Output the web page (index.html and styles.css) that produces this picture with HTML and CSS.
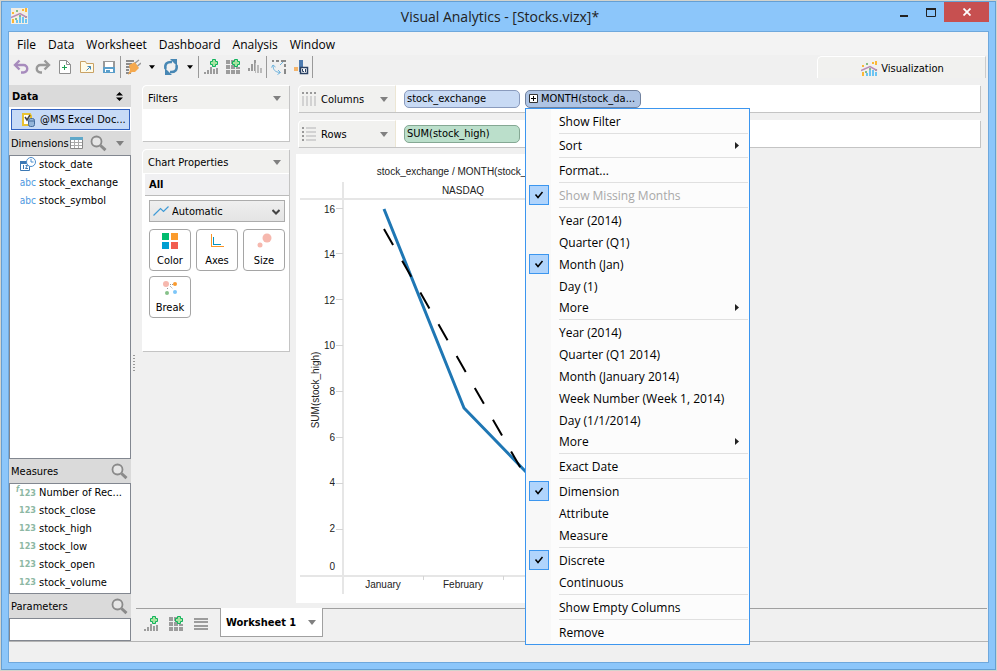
FILE: index.html
```html
<!DOCTYPE html>
<html lang="en">
<head>
    <meta charset="UTF-8">
    <meta name="viewport" content="width=device-width, initial-scale=1.0">
    <title>Visual Analytics - [Stocks.vizx]*</title>
    <link rel="stylesheet" href="styles.css">
</head>
<body>
    <!-- Shared icons -->
    <svg class="sprite" aria-hidden="true">
        <symbol id="i-search" viewBox="0 0 17 17">
            <path d="M10.5 10.5l5 4.700" stroke="#8a8a8a" stroke-width="3" fill="none"/>
            <circle cx="6.500" cy="6.500" r="5" fill="#e6e6e6" stroke="#8a8a8a" stroke-width="1.800"/>
        </symbol>
        <symbol id="i-caret" viewBox="0 0 8 5">
            <path d="M0 0h8L4 5z" fill="currentColor"/>
        </symbol>
        <symbol id="i-addchart" viewBox="0 0 16 16">
            <path d="M1 13h2v2H1zM4 11h2v4H4zM7 8h2v7H7zM10 10h2v5h-2zM13 9h2v6h-2z" fill="#9c9c9c"/>
            <path d="M9.500.5h3v2h2v3h-2v2h-3v-2h-2v-3h2z" fill="#a9e3a0" stroke="#10b35c"/>
        </symbol>
        <symbol id="i-addgrid" viewBox="0 0 16 16">
            <path d="M1 1h4v4H1zM6 1h3v4H6zM1 6h4v4H1zM6 6h4v4H6zM1 11h4v4H1zM6 11h4v4H6zM11 11h4v4h-4zM11 8h4v2h-4z" fill="#9c9c9c"/>
            <path d="M9.500.5h3v2h2v3h-2v2h-3v-2h-2v-3h2z" fill="#a9e3a0" stroke="#10b35c"/>
        </symbol>
        <symbol id="i-viz" viewBox="0 0 17 16">
            <path d="M1 4h2v2H1zM11 1h2v2h-2zM14 0h2v4h-2zM1 11h2v4H1z" fill="#fbb836"/>
            <path d="M5 2h2v2H5zM4 10h2v2H4zM8 7h2v2H8zM14 8h2v2h-2z" fill="#86bd85"/>
            <path d="M5 12h2v3H5zM8 9h2v6H8zM11 9h2v6h-2zM14 11h2v4h-2z" fill="#6cc4f2"/>
            <path d="M0 9.500l9-4 7 4" fill="none" stroke="#b98bb5" stroke-width="1.500"/>
        </symbol>
        <symbol id="i-tick" viewBox="0 0 18 18">
            <path d="M5.500 8.500l2.500 3 4.500-5.500" fill="none" stroke="#000" stroke-width="1.500"/>
        </symbol>
        <symbol id="i-sub" viewBox="0 0 4 7">
            <path d="M0 0l4 3.500L0 7z" fill="#222"/>
        </symbol>
    </svg>

    <div class="window">
        <header class="titlebar">
            <svg class="app-icon" viewBox="0 0 17 16"><rect width="17" height="16" fill="#f3eee4"/><use href="#i-viz"/></svg>
            <h1>Visual Analytics - [Stocks.vizx]*</h1>
            <div class="window-buttons">
                <button class="win-btn" aria-label="Minimize"><svg width="10" height="12"><path d="M1 9h8v2H1z" fill="#222"/></svg></button>
                <button class="win-btn" aria-label="Maximize"><svg width="10" height="9"><path d="M.5 1v7.500h9V1" fill="none" stroke="#222"/><path d="M0 0h10v2H0z" fill="#222"/></svg></button>
                <button class="win-btn close" aria-label="Close"><svg width="8" height="8"><path d="M.5.5l7 7M7.500.5l-7 7" stroke="#fff" stroke-width="1.800"/></svg></button>
            </div>
        </header>

        <div class="client">
            <nav class="menubar">
                <button>File</button>
                <button>Data</button>
                <button>Worksheet</button>
                <button>Dashboard</button>
                <button>Analysis</button>
                <button>Window</button>
            </nav>

            <div class="toolbar">
                <button class="tool" aria-label="Undo"><svg viewBox="0 0 16 16"><path d="M2 6h8.500a3.500 3.500 0 0 1 0 7.500H8" fill="none" stroke="#a78bbd" stroke-width="2.400"/><path d="M6.500 1.500L2 6l4.500 4.500" fill="none" stroke="#a78bbd" stroke-width="2.400"/></svg></button>
                <button class="tool" aria-label="Redo"><svg viewBox="0 0 16 16"><path d="M14 6H5.500a3.500 3.500 0 0 0 0 7.500H7" fill="none" stroke="#999" stroke-width="2.400"/><path d="M9.500 1.500L14 6l-4.500 4.500" fill="none" stroke="#999" stroke-width="2.400"/></svg></button>
                <button class="tool" aria-label="New"><svg viewBox="0 0 16 16"><path d="M2.500 1.500h7l4 4v9h-11z" fill="#fff" stroke="#8f8f8f"/><path d="M9.500 1.500v4h4" fill="none" stroke="#8f8f8f"/><path d="M7.500 6v5M5 8.500h5" stroke="#1da153"/></svg></button>
                <button class="tool" aria-label="Open"><svg viewBox="0 0 16 16"><path d="M1.500 2.500h5l1 2h7v9h-13z" fill="#fffbe8" stroke="#c9a265"/><path d="M7.500 11.500l4-4M8.500 7.500h3v3" fill="none" stroke="#3e86bd"/></svg></button>
                <button class="tool" aria-label="Save"><svg viewBox="0 0 16 16"><path d="M2 2h12v7H2z" fill="#999"/><path d="M4 3h8v5H4z" fill="#fff"/><path d="M2 8h12v6H2z" fill="#5b9fcb"/><path d="M4 10h8v3H4z" fill="#fff"/><path d="M5 11h4v2H5z" fill="#5b9fcb"/></svg></button>
                <span class="divider"></span>
                <button class="tool" aria-label="Connect data"><svg viewBox="0 0 16 16"><path d="M1 1h8v2H1zM1 4h6v2H1zM1 7h4v2H1zM1 10h3v2H1zM1 13h5v2H1z" fill="#8c8c8c"/><path d="M4 6l6-3 4 6-4 4H7l-4 3 2-5z" fill="#f5a94e"/><path d="M10 4l4-3M12.500 7L16 4" stroke="#999" stroke-width="1.500"/></svg></button>
                <button class="tool-drop" aria-label="Connect options"><svg><use href="#i-caret"/></svg></button>
                <button class="tool" aria-label="Refresh"><svg viewBox="0 0 16 16"><path d="M2.500 10C1.500 5 4 2.500 9 3M13.500 6c1 5-1.500 7.500-6.500 7" fill="none" stroke="#4787b4" stroke-width="2.500"/><path d="M7 0h7v7zM9 16H2V9z" fill="#4787b4"/></svg></button>
                <button class="tool-drop" aria-label="Refresh options"><svg><use href="#i-caret"/></svg></button>
                <span class="divider"></span>
                <button class="tool" aria-label="New worksheet"><svg><use href="#i-addchart"/></svg></button>
                <button class="tool" aria-label="New dashboard"><svg><use href="#i-addgrid"/></svg></button>
                <button class="tool" aria-label="Duplicate"><svg viewBox="0 0 16 16"><path d="M1 9h2v3H1zM4 5h2v7H4zM7 1h2v11H7z" fill="#999"/><path d="M8 4h1v10H8zM10 6h2v8h-2zM13 9h2v5h-2z" fill="#bbb"/></svg></button>
                <span class="divider"></span>
                <button class="tool" aria-label="Swap axes"><svg viewBox="0 0 16 16"><path d="M1 1h2v2H1zM5 1h3v2H5zM10 1h5v2h-5zM13 5h2v3h-2zM13 10h2v5h-2z" fill="#888"/><path d="M2 6c0 5 2 7 7 7.500M.5 8.500L2 6l2.500 2M6.500 15.500l3-2-2.500-2.500M9 6l3-3" fill="none" stroke="#6fb3dd"/></svg></button>
                <button class="tool" aria-label="Show labels"><svg viewBox="0 0 16 16"><path d="M1 8h4v4H1z" fill="#f5b56b"/><path d="M6 1h4v12H6z" fill="#4d7bb0"/><path d="M7.500 8.500h7v6h-7z" fill="#fff" stroke="#2b4264" stroke-width="1.500"/><path d="M9.500 10v2.500h1.500M12.500 10v3" fill="none" stroke="#2b4264"/></svg></button>
                <span class="divider"></span>
                <button class="viz-tab"><svg><use href="#i-viz"/></svg>Visualization</button>
            </div>

            <div class="workspace">
                <aside class="sidebar">
                    <div class="side-head strong">
                        <span class="label">Data</span>
                        <svg class="updown" viewBox="0 0 7 9"><path d="M0 3.500L3.500 0 7 3.500zM0 5.500L3.500 9 7 5.500z"/></svg>
                    </div>
                    <div class="source-box">
                        <button class="source">
                            <svg width="14" height="14"><path d="M1 1h7l1 2v9H1z" fill="#fff" stroke="#e8c132" stroke-width="2"/><path d="M3 4l2 3 3-5" fill="none" stroke="#444" stroke-width="1.500"/><rect x="6.500" y="5.500" width="6" height="8" rx="2" fill="#94b5d9" stroke="#436b9c"/><path d="M6.500 8h6" stroke="#436b9c"/></svg>
                            @MS Excel Doc...
                        </button>
                    </div>
                    <div class="side-head">
                        <span>Dimensions</span>
                        <svg class="grid-icon" width="13" height="12"><path d="M.5.5h12v11H.5z" fill="#fff" stroke="#888"/><path d="M0 0h13v3H0z" fill="#5fa8c9"/><path d="M4.500 3v8M8.500 3v8M1 5.500h11M1 8.500h11" stroke="#aaa"/></svg>
                        <svg class="search"><use href="#i-search"/></svg>
                        <svg class="caret"><use href="#i-caret"/></svg>
                    </div>
                    <ul class="fields dimensions">
                        <li><svg class="date-icon" width="16" height="14"><path d="M.5 4.500h9v9h-9z" fill="#fff" stroke="#3c78b4"/><path d="M0 4h10v3H0z" fill="#3c78b4"/><path d="M3.500 8v4M5.500 8.500h2l-2 3h2.500" fill="none" stroke="#3c78b4"/><circle cx="11" cy="5" r="4.500" fill="#fff" stroke="#4b8ccc"/><path d="M11 2v3h2.500" fill="none" stroke="#4b8ccc"/></svg>stock_date</li>
                        <li><span class="type text">abc</span>stock_exchange</li>
                        <li><span class="type text">abc</span>stock_symbol</li>
                    </ul>
                    <div class="side-head">
                        <span class="label">Measures</span>
                        <svg class="search"><use href="#i-search"/></svg>
                    </div>
                    <ul class="fields">
                        <li><span class="type num"><sup>f</sup>123</span>Number of Rec...</li>
                        <li><span class="type num">123</span>stock_close</li>
                        <li><span class="type num">123</span>stock_high</li>
                        <li><span class="type num">123</span>stock_low</li>
                        <li><span class="type num">123</span>stock_open</li>
                        <li><span class="type num">123</span>stock_volume</li>
                    </ul>
                    <div class="side-head">
                        <span class="label">Parameters</span>
                        <svg class="search"><use href="#i-search"/></svg>
                    </div>
                    <ul class="fields parameters"></ul>
                </aside>

                <div class="splitter"><span></span></div>

                <main class="main">
                    <div class="board">
                        <div class="cards">
                            <section class="card filters">
                                <h2>Filters <svg class="caret"><use href="#i-caret"/></svg></h2>
                            </section>
                            <section class="card properties">
                                <h2>Chart Properties <svg class="caret"><use href="#i-caret"/></svg></h2>
                                <h3>All</h3>
                                <div class="mark-type">
                                    <svg class="mark-icon" width="16" height="12"><path d="M.5 10.500l7-7 3 3 5-5" fill="none" stroke="#3f9bd6" stroke-width="1.200"/></svg>
                                    <select aria-label="Mark type"><option>Automatic</option></select>
                                    <svg class="chevron" width="8" height="6"><path d="M.5 1L4 4.500 7.500 1" fill="none" stroke="#444" stroke-width="2"/></svg>
                                </div>
                                <div class="props">
                                    <button><svg width="18" height="18"><path d="M1 1h7v7H1z" fill="#00bb6e"/><path d="M10 1h7v7h-7z" fill="#fb9b2d"/><path d="M1 10h7v7H1z" fill="#009fd1"/><path d="M10 10h7v7h-7z" fill="#f15e50"/></svg>Color</button>
                                    <button><svg width="18" height="18"><path d="M3 2h1v12h12v1H3z" fill="#f9962a"/><path d="M5 5h1v7h7v1H5z" fill="#0093c4"/></svg>Axes</button>
                                    <button><svg width="18" height="18"><circle cx="12" cy="6" r="4.500" fill="#f6b8ae"/><circle cx="5" cy="13" r="2.500" fill="#f6b8ae"/></svg>Size</button>
                                    <button><svg width="18" height="18"><circle cx="5" cy="5" r="3" fill="#f6b8ae"/><circle cx="14" cy="5" r="2" fill="#f99a2f"/><circle cx="6" cy="14" r="2" fill="#86c189"/><circle cx="14" cy="13" r="2" fill="#7dc6f8"/><path d="M9 5.500h3M9 7l3 3M6.500 9v2" fill="none" stroke="#999" stroke-dasharray="1 1"/></svg>Break</button>
                                </div>
                            </section>
                        </div>

                        <div class="canvas">
                            <div class="shelf">
                                <div class="shelf-head">
                                    <svg width="15" height="14"><path d="M0 0h2v2H0zM4 0h2v2H4zM8 0h2v2H8zM12 0h2v2h-2z" fill="#999"/><path d="M0 4h2v10H0zM4 4h2v10H4zM8 4h2v10H8zM12 4h2v10h-2z" fill="#d2d2d2"/></svg>
                                    <span class="label">Columns</span>
                                    <svg class="caret"><use href="#i-caret"/></svg>
                                </div>
                                <button class="pill blue">stock_exchange</button>
                                <div class="pill-anchor">
                                    <button class="pill blue active" aria-expanded="true">
                                        <svg width="9" height="9"><path d="M.5.5h8v8h-8z" fill="#fff" stroke="#333"/><path d="M4.500 2v5M2 4.500h5" stroke="#000"/></svg>
                                        MONTH(stock_da...
                                    </button>
                                    <div class="menu" role="menu">
                                        <button role="menuitem">Show Filter</button>
                                        <hr>
                                        <button role="menuitem" class="has-sub">Sort<svg class="sub"><use href="#i-sub"/></svg></button>
                                        <hr>
                                        <button role="menuitem">Format...</button>
                                        <hr>
                                        <button role="menuitemcheckbox" aria-checked="true" disabled><svg class="tick"><use href="#i-tick"/></svg>Show Missing Months</button>
                                        <hr>
                                        <button role="menuitem">Year (2014)</button>
                                        <button role="menuitem">Quarter (Q1)</button>
                                        <button role="menuitemcheckbox" aria-checked="true"><svg class="tick"><use href="#i-tick"/></svg>Month (Jan)</button>
                                        <button role="menuitem">Day (1)</button>
                                        <button role="menuitem" class="has-sub">More<svg class="sub"><use href="#i-sub"/></svg></button>
                                        <hr>
                                        <button role="menuitem">Year (2014)</button>
                                        <button role="menuitem">Quarter (Q1 2014)</button>
                                        <button role="menuitem">Month (January 2014)</button>
                                        <button role="menuitem">Week Number (Week 1, 2014)</button>
                                        <button role="menuitem">Day (1/1/2014)</button>
                                        <button role="menuitem" class="has-sub">More<svg class="sub"><use href="#i-sub"/></svg></button>
                                        <hr>
                                        <button role="menuitem">Exact Date</button>
                                        <hr>
                                        <button role="menuitemcheckbox" aria-checked="true"><svg class="tick"><use href="#i-tick"/></svg>Dimension</button>
                                        <button role="menuitem">Attribute</button>
                                        <button role="menuitem">Measure</button>
                                        <hr>
                                        <button role="menuitemcheckbox" aria-checked="true"><svg class="tick"><use href="#i-tick"/></svg>Discrete</button>
                                        <button role="menuitem">Continuous</button>
                                        <hr>
                                        <button role="menuitem">Show Empty Columns</button>
                                        <hr>
                                        <button role="menuitem">Remove</button>
                                    </div>
                                </div>
                            </div>
                            <div class="shelf">
                                <div class="shelf-head">
                                    <svg width="15" height="14"><path d="M0 0h2v2H0zM0 4h2v2H0zM0 8h2v2H0zM0 12h2v2H0z" fill="#999"/><path d="M4 0h10v2H4zM4 4h10v2H4zM4 8h10v2H4zM4 12h10v2H4z" fill="#d2d2d2"/></svg>
                                    <span class="label">Rows</span>
                                    <svg class="caret"><use href="#i-caret"/></svg>
                                </div>
                                <button class="pill green">SUM(stock_high)</button>
                            </div>

                            <div class="chart">
                                <svg width="300" height="446">
                                    <!-- frame and ticks -->
                                    <path d="M47 28v412M4 45h284M4 422h284" fill="none" stroke="#e6e6e6" stroke-width="2"/>
                                    <path d="M40 54.500h7M40 99.500h7M40 145.500h7M40 191.500h7M40 237.500h7M40 283.500h7M40 329.500h7M40 375.500h7M127.500 422v4M207.500 422v4M287.500 422v4" fill="none" stroke="#d4d4d4"/>
                                    <g text-anchor="middle">
                                        <text x="167" y="21">stock_exchange / MONTH(stock_date)</text>
                                        <text x="167" y="40">NASDAQ</text>
                                        <text x="87" y="434">January</text>
                                        <text x="167" y="434">February</text>
                                        <text x="247" y="434">March</text>
                                        <text transform="translate(23 236) rotate(-90)">SUM(stock_high)</text>
                                    </g>
                                    <g text-anchor="end">
                                        <text x="39" y="59">16</text>
                                        <text x="39" y="104">14</text>
                                        <text x="39" y="150">12</text>
                                        <text x="39" y="195">10</text>
                                        <text x="39" y="241">8</text>
                                        <text x="39" y="287">6</text>
                                        <text x="39" y="332">4</text>
                                        <text x="39" y="378">2</text>
                                        <text x="39" y="416">0</text>
                                    </g>
                                    <path d="M88 55l80 199 63 65" fill="none" stroke="#1f77b4" stroke-width="3"/>
                                    <path d="M88 75l140 245" fill="none" stroke="#000" stroke-width="2" stroke-dasharray="18.300 18.300"/>
                                </svg>
                            </div>
                        </div>
                    </div>

                    <div class="tabs">
                        <div class="tab-tools">
                            <button aria-label="New worksheet"><svg><use href="#i-addchart"/></svg></button>
                            <button aria-label="New dashboard"><svg><use href="#i-addgrid"/></svg></button>
                            <button aria-label="Sheet list"><svg viewBox="0 0 16 16"><path d="M1 2h14v2H1zM1 5h14v2H1zM1 9h14v2H1zM1 12h14v2H1z" fill="#9c9c9c"/></svg></button>
                        </div>
                        <button class="sheet">Worksheet 1 <svg class="caret"><use href="#i-caret"/></svg></button>
                        <div class="tab-rest"></div>
                    </div>
                </main>
            </div>

            <footer class="status"></footer>
        </div>
    </div>
</body>
</html>
```

FILE: styles.css
```css
* {
    margin: 0;
    padding: 0;
    box-sizing: border-box;
}

body {
    font-family: "DejaVu Sans Condensed", "DejaVu Sans", sans-serif;
    font-size: 11px;
    background: #d3d3cc;
    color: #000;
    padding: 1px;
}

button, select {
    font: inherit;
    color: inherit;
    background: none;
    border: none;
}

svg {
    flex: none;
    display: block;
}

.sprite {
    position: absolute;
    width: 0;
    height: 0;
}

.label {
    flex: 1;
}

/* Window frame */
.window {
    display: flex;
    flex-direction: column;
    min-height: calc(100vh - 2px);
    border: 1px solid #659fd3;
    background: #8cc6fa;
}

.titlebar {
    display: grid;
    grid-template-columns: 1fr auto 1fr;
    height: 29px;
    padding: 0 6px 0 9px;
}

.app-icon {
    width: 17px;
    height: 16px;
    margin-top: 6px;
}

.titlebar h1 {
    font: 14px/29px "Open Sans", sans-serif;
    color: #222;
}

.window-buttons {
    display: flex;
    justify-content: flex-end;
    height: 20px;
}

.win-btn {
    display: flex;
    align-items: center;
    justify-content: center;
    width: 27px;
}

.win-btn.close {
    width: 45px;
    background: #c75050;
}

.client {
    flex: 1;
    display: flex;
    flex-direction: column;
    margin: 0 6px 6px;
    border: 1px solid #6fa8dc;
    background: #f0f0f0;
}

.menubar {
    display: flex;
    height: 23px;
    padding-left: 2px;
    background: #f3f3f3;
    font: 12px "Open Sans", sans-serif;
}

.menubar button {
    padding: 2px 6px 0;
}

/* Toolbar */
.toolbar {
    display: flex;
    height: 30px;
    padding: 0 2px 5px 1px;
}

.tool,
.tool-drop {
    display: flex;
    align-items: center;
    justify-content: center;
    width: 22px;
    height: 24px;
}

.tool svg {
    width: 16px;
    height: 16px;
}

.tool-drop {
    width: 16px;
}

.tool-drop svg {
    width: 6px;
    height: 4px;
}

.divider {
    width: 1px;
    height: 22px;
    margin: 1px 1px 0 0;
    background: #9a9a9a;
}

.viz-tab {
    display: flex;
    align-items: center;
    justify-content: center;
    gap: 3px;
    width: 169px;
    margin: 1px 0 2px auto;
    padding: 2px 0 0 2px;
    border-top: 1px solid #fff;
    border-left: 1px solid #fff;
    border-right: 1px solid #ccc;
    border-radius: 5px 0 0 0;
    background: #f1f1ef;
}

.viz-tab svg {
    width: 17px;
    height: 16px;
}

/* Data pane */
.workspace {
    flex: 1;
    display: flex;
}

.sidebar {
    display: flex;
    flex-direction: column;
    width: 122px;
}

.side-head {
    display: flex;
    align-items: center;
    height: 24px;
    padding: 0 3px 0 2px;
    background: #dadada;
}

.side-head.strong {
    height: 22px;
    padding: 0 8px 0 3px;
    font-weight: bold;
}

.updown {
    width: 7px;
    height: 9px;
}

.search {
    width: 17px;
    height: 17px;
}

.caret {
    width: 8px;
    height: 5px;
    color: #808080;
}

.grid-icon {
    margin: 0 7px 0 auto;
}

.side-head .caret {
    margin: 0 4px 0 9px;
}

.source-box {
    padding: 2px 1px 1px 2px;
    background: #fff;
}

.source {
    display: flex;
    align-items: center;
    gap: 4px;
    width: 100%;
    height: 21px;
    padding-left: 10px;
    border: 1px solid #3161c0;
    background: #c7daf6;
    white-space: nowrap;
}

.fields {
    list-style: none;
    padding-bottom: 1px;
    border: 1px solid #828790;
    background: #fff;
}

.fields.dimensions {
    flex: 1;
}

.fields.parameters {
    height: 23px;
}

.fields li {
    display: flex;
    align-items: center;
    height: 18px;
    padding-bottom: 2px;
    white-space: nowrap;
}

.date-icon {
    margin: 0 3px 0 10px;
}

.type {
    width: 29px;
    padding-right: 3px;
    text-align: right;
    font-size: 10px;
    font-weight: bold;
}

.type.text {
    font-weight: normal;
    color: #4d97e0;
}

.type.num {
    font-size: 9px;
    color: #8db8a4;
}

.type sup {
    font-size: 8px;
    font-style: italic;
    line-height: 1;
}

.splitter {
    display: flex;
    align-items: center;
    width: 5px;
    padding-left: 2px;
}

.splitter span {
    width: 2px;
    height: 16px;
    background: repeating-linear-gradient(#999 0 1px, #f0f0f0 1px 3px);
}

/* Main area */
.main {
    flex: 1;
    display: flex;
    flex-direction: column;
}

.board {
    flex: 1;
    display: flex;
    gap: 7px;
    padding: 0 8px 0 6px;
}

.cards {
    display: flex;
    flex-direction: column;
    gap: 8px;
    width: 147px;
}

.card {
    background: #fff;
    border-radius: 5px 0 0 0;
    box-shadow: 1px 1px 0 #c4c4c4;
}

.card h2 {
    display: flex;
    align-items: center;
    justify-content: space-between;
    height: 24px;
    padding: 2px 8px 0 5px;
    border-top: 1px solid #fff;
    border-left: 1px solid #fff;
    border-radius: 5px 0 0 0;
    background: #f1f1ef;
    font-size: 11px;
    font-weight: normal;
}

.filters {
    height: 56px;
}

.properties {
    height: 202px;
}

.card h3 {
    margin: 1px 0 0 3px;
    padding-left: 4px;
    border-bottom: 1px solid #bbb;
    background: #f0f0f2;
    font-size: 11px;
    line-height: 21px;
}

.mark-type {
    position: relative;
    margin: 4px 4px 7px 7px;
}

.mark-type select {
    appearance: none;
    width: 100%;
    height: 22px;
    padding-left: 22px;
    border: 1px solid #acacac;
    background: linear-gradient(#efefef, #e4e4e4);
}

.mark-icon {
    position: absolute;
    left: 4px;
    top: 5px;
}

.chevron {
    position: absolute;
    right: 5px;
    top: 9px;
}

.props {
    display: flex;
    flex-wrap: wrap;
    gap: 5px;
    margin: 0 4px 0 7px;
}

.props button {
    display: flex;
    flex-direction: column;
    align-items: center;
    gap: 4px;
    width: 42px;
    height: 42px;
    padding-top: 2px;
    border: 1px solid #a5a5a5;
    border-radius: 4px;
}

/* Shelves */
.canvas {
    flex: 1;
    display: flex;
    flex-direction: column;
}

.shelf {
    display: flex;
    align-items: center;
    gap: 5px;
    height: 27px;
    margin: 0 0 8px 2px;
    background: #fff;
    border-radius: 5px 0 0 0;
    box-shadow: 1px 1px 0 #c4c4c4;
}

.shelf-head {
    display: flex;
    align-items: center;
    gap: 4px;
    width: 98px;
    height: 27px;
    margin-right: 3px;
    padding: 0 7px 0 3px;
    border: 1px solid #fff;
    border-width: 1px 0 0 1px;
    border-right: 1px solid #ece6d4;
    border-radius: 5px 0 0 0;
    background: #f1f1ef;
}

.pill {
    display: flex;
    align-items: center;
    gap: 3px;
    width: 116px;
    height: 18px;
    padding: 0 2px;
    border: 1px solid #8a9bbd;
    border-radius: 5px;
    white-space: nowrap;
}

.pill.blue {
    background: #c8daf4;
}

.pill.active {
    padding: 0 3px;
    background: #aec4e4;
    border-color: #71829f;
}

.pill.green {
    background: #bbdfcb;
    border-color: #85a894;
}

.pill-anchor {
    position: relative;
}

/* Field menu, opened below its pill */
.menu {
    position: absolute;
    top: 100%;
    left: 0;
    z-index: 10;
    width: 225px;
    padding: 2px 0 0;
    border: 1px solid #3c96ef;
    background: linear-gradient(90deg, #f8f8f8 25px, #fcfcfc 25px);
    font: 12px "Open Sans", sans-serif;
}

.menu button {
    display: flex;
    align-items: center;
    position: relative;
    width: 100%;
    height: 22px;
    padding-left: 33px;
    white-space: nowrap;
}

.menu button.has-sub {
    height: 21px;
    padding-bottom: 1px;
}

.menu button:disabled {
    color: #a8a8a8;
}

.menu hr {
    height: 3px;
    margin: 0 1px 0 33px;
    border: none;
    border-top: 1px solid #e0e0e0;
}

.tick {
    position: absolute;
    left: 3px;
    top: 0;
    width: 20px;
    height: 20px;
    border: 1px solid #3c96ef;
    background: #b0d4fc;
}

.sub {
    width: 4px;
    height: 7px;
    margin: 0 10px 0 auto;
}

/* Chart */
.chart {
    flex: 1;
    width: 300px;
    margin-top: -1px;
    background: #fff;
    font: 10px "Liberation Sans", sans-serif;
}

.chart text {
    fill: #222;
}

/* Sheet tabs */
.tabs {
    display: flex;
    height: 33px;
    margin-top: 5px;
    padding-right: 1px;
}

.tab-tools {
    display: flex;
    align-items: center;
    gap: 9px;
    width: 84px;
    padding: 0 0 2px 7px;
    border-top: 1px solid #a0a0a0;
}

.tab-tools svg {
    width: 16px;
    height: 16px;
}

.sheet {
    display: flex;
    align-items: center;
    justify-content: space-between;
    width: 103px;
    height: 29px;
    padding: 0 6px 0 5px;
    border: 1px solid #a0a0a0;
    border-top: none;
    background: #fff;
    font-weight: bold;
}

.tab-rest {
    flex: 1;
    border-top: 1px solid #a0a0a0;
}

.status {
    height: 21px;
    border-top: 1px solid #b4b4b4;
}
```
